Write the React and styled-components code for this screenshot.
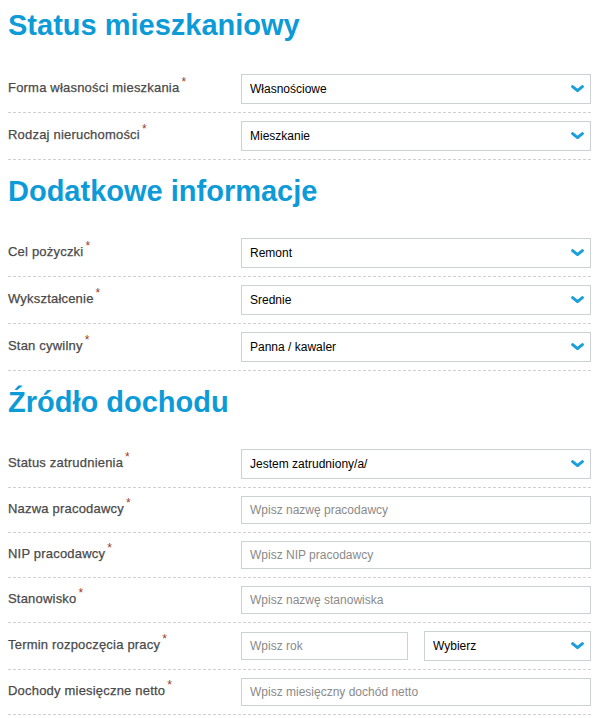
import React from 'react'
import styled, { createGlobalStyle } from 'styled-components'

const GlobalStyle = createGlobalStyle`
    body {
        margin: 0;
        background: #fff;
        font-family: "Liberation Sans", Arial, sans-serif;
    }
`

const Page = styled.div`
    width: 583px;
    padding: 8px 0 0 8px;
`

const Heading = styled.h2`
    margin: ${props => props.first ? "0 0 24px" : "14px 0 22px"};
    font-size: 29px;
    line-height: 34px;
    font-weight: bold;
    color: #0d9bd8;
`

const Row = styled.div`
    display: grid;
    grid-template-columns: 233px 1fr;
    align-items: center;
    padding: 8px 0 9px;
    background: linear-gradient(to right, #cfd2d4 60%, transparent 0) left bottom / 5px 1px repeat-x;
`

const Label = styled.label`
    display: block;
    font-size: 13px;
    line-height: 16px;
    margin-top: -2px;
    color: #4a4a4a;
    letter-spacing: 0.2px;
    -webkit-text-stroke: 0.25px #4a4a4a;
`

const Star = styled.span`
    display: inline-block;
    margin-left: 2px;
    font-size: 12px;
    line-height: 0;
    vertical-align: 6px;
    color: #9a3d24;
    -webkit-text-stroke: 0;
`

const Controls = styled.div`
    display: grid;
    grid-auto-flow: column;
    grid-auto-columns: 1fr;
    align-items: center;
    gap: 16px;
`

const SelectWrap = styled.div`
    position: relative;
    height: 30px;
`

const Select = styled.select`
    appearance: none;
    -webkit-appearance: none;
    width: 100%;
    height: 30px;
    box-sizing: border-box;
    border: 1px solid #ccd1d5;
    border-radius: 0;
    background: #fff;
    padding: 0 30px 0 8px;
    font-family: "Liberation Sans", Arial, sans-serif;
    font-size: 12px;
    color: #000;
    outline: none;
`

const Chevron = styled.svg`
    position: absolute;
    right: 7px;
    top: 11px;
    pointer-events: none;
`

const Input = styled.input`
    width: 100%;
    min-width: 0;
    height: 28px;
    box-sizing: border-box;
    border: 1px solid #ccd1d5;
    border-radius: 0;
    padding: 0 8px;
    font-family: "Liberation Sans", Arial, sans-serif;
    font-size: 12px;
    color: #111;
    outline: none;
    &::placeholder {
        color: #8a8a8a;
    }
`

function Dropdown ({ value }) {
    return (
        <SelectWrap>
            <Select defaultValue={value}>
                <option>{value}</option>
            </Select>
            <Chevron width="13" height="8" viewBox="0 0 13 8">
                <path d="M1.6 1.6 L6.5 5.6 L11.4 1.6" fill="none" stroke="#1a9fdb" strokeWidth="3" strokeLinecap="round" strokeLinejoin="round" />
            </Chevron>
        </SelectWrap>
    )
}

const sections = [
    {
        title: 'Status mieszkaniowy',
        rows: [
            { label: 'Forma własności mieszkania', select: 'Własnościowe' },
            { label: 'Rodzaj nieruchomości', select: 'Mieszkanie' },
        ],
    },
    {
        title: 'Dodatkowe informacje',
        rows: [
            { label: 'Cel pożyczki', select: 'Remont' },
            { label: 'Wykształcenie', select: 'Srednie' },
            { label: 'Stan cywilny', select: 'Panna / kawaler' },
        ],
    },
    {
        title: 'Źródło dochodu',
        rows: [
            { label: 'Status zatrudnienia', select: 'Jestem zatrudniony/a/' },
            { label: 'Nazwa pracodawcy', input: 'Wpisz nazwę pracodawcy' },
            { label: 'NIP pracodawcy', input: 'Wpisz NIP pracodawcy' },
            { label: 'Stanowisko', input: 'Wpisz nazwę stanowiska' },
            { label: 'Termin rozpoczęcia pracy', input: 'Wpisz rok', select: 'Wybierz' },
            { label: 'Dochody miesięczne netto', input: 'Wpisz miesięczny dochód netto' },
        ],
    },
]

export default function App () {
    return (
        <Page>
            <GlobalStyle />
            {sections.map((section, i) => (
                <section key={section.title}>
                    <Heading first={i === 0}>{section.title}</Heading>
                    {section.rows.map(row => (
                        <Row key={row.label}>
                            <Label>{row.label}<Star>*</Star></Label>
                            <Controls>
                                {row.input && <Input placeholder={row.input} />}
                                {row.select && <Dropdown value={row.select} />}
                            </Controls>
                        </Row>
                    ))}
                </section>
            ))}
        </Page>
    )
}
